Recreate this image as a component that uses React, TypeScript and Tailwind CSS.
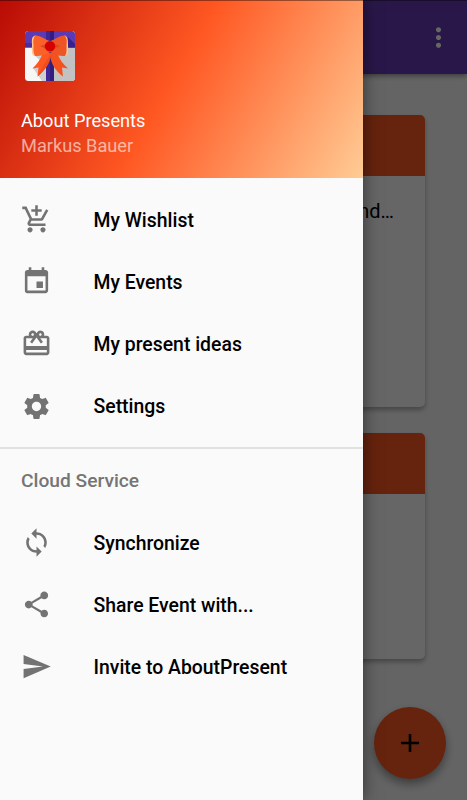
import React from 'react';
import type { IconType } from 'react-icons';
import {
  MdAdd,
  MdAddShoppingCart,
  MdEvent,
  MdMoreVert,
  MdRedeem,
  MdSend,
  MdSettings,
  MdShare,
  MdSync,
} from 'react-icons/md';

interface MenuItem {
  label: string;
  icon: IconType;
}

const mainItems: MenuItem[] = [
  { label: 'My Wishlist', icon: MdAddShoppingCart },
  { label: 'My Events', icon: MdEvent },
  { label: 'My present ideas', icon: MdRedeem },
  { label: 'Settings', icon: MdSettings },
];

const cloudItems: MenuItem[] = [
  { label: 'Synchronize', icon: MdSync },
  { label: 'Share Event with...', icon: MdShare },
  { label: 'Invite to AboutPresent', icon: MdSend },
];

const PresentLogo = () => (
  <svg width="50" height="50" viewBox="0 0 50 50">
    <defs>
      <clipPath id="box">
        <rect width="50" height="50" rx="3.5" />
      </clipPath>
    </defs>
    <g clipPath="url(#box)">
      <rect width="50" height="50" fill="#f7f7f7" />
      <rect x="29" width="21" height="50" fill="#c2c2c2" />
      <path d="M9 24 17 31 8 37 17 50H22V24Z" fill="#cfcfcf" />
      <rect width="50" height="16.5" fill="#5a3ab5" />
      <path d="M0 12H50V16.5H0Z" fill="#4a2e9e" />
      <path d="M43 6 50 13V16.5H41Z" fill="#39208a" />
      <rect x="21" width="8" height="50" fill="#402699" />
      <rect x="25" width="4" height="50" fill="#311c80" />
    </g>
    <path d="M10 4.5C6 6 7 10 7 14C7 19 6 23 9 25L14 22V6Z" fill="#ffc691" />
    <path d="M40 4.5C43 6 43 10 43 14C43 19 44 23 41 25L36 22V6Z" fill="#ffc691" />
    <path d="M18 21C16 28 12 33 7.500 37.500L13.500 36.500 12.500 45.500C19 40 24 34 26 22Z" fill="#ff5722" />
    <path d="M32 21C34 28 38 33 43 37.500L37 36.500 38 45.500C31 40 26 34 24.500 22Z" fill="#f4511e" />
    <path d="M25.500 24 19 33 12.500 45.500C19 40 24 34 25.500 27Z" fill="#ee4d1c" />
    <path d="M25 10C20 9 17 4.500 10 4.500C8 8 8 10 8.500 14C8.500 18 8 22 10 25C17 25 20 23.500 25 21Z" fill="#fb6229" />
    <path d="M25 10C30 9 33 4.500 40 4.500C42 8 42 10 41.500 14C41.500 18 42 22 40 25C33 25 30 23.500 25 21Z" fill="#ed5525" />
    <path d="M21 13 15 15 20 17.500Z" fill="#e04c1c" />
    <path d="M29 13 35 15 30 17.500Z" fill="#dc481a" />
    <circle cx="25" cy="15.2" r="5.2" fill="#d50000" />
  </svg>
);

const MenuRow = ({ label, icon: Icon }: MenuItem) => (
  <li className="flex h-[62.2px] items-center pl-[20.5px]">
    <Icon size={31} className="shrink-0 text-[#737373]" />
    <span className="ml-[42px] pt-[2px] whitespace-nowrap text-[19.4px] font-medium text-black">{label}</span>
  </li>
);

const EventList = () => (
  <div className="flex h-full flex-col bg-[#fafafa]">
    <header className="z-10 flex h-[74px] shrink-0 items-center justify-end bg-[#673ab7] pr-[13px] shadow-[0_2px_5px_rgba(0,0,0,0.4)]">
      <MdMoreVert size={31} className="text-white" />
    </header>
    <main className="flex flex-col gap-[26px] pt-[41.4px] pr-[41.6px] pl-[41px]">
      <section className="h-[292px] overflow-hidden rounded-[5px] bg-white shadow-[0_3px_5px_rgba(0,0,0,0.3)]">
        <div className="h-[61px] bg-[#ff5722]" />
        <p className="pt-[21px] pr-[31.5px] text-right text-[20px] leading-[28px] text-black">Birthday of a friend…</p>
      </section>
      <section className="h-[225.5px] overflow-hidden rounded-[5px] bg-white shadow-[0_3px_5px_rgba(0,0,0,0.3)]">
        <div className="h-[61px] bg-[#ff5722]" />
      </section>
    </main>
    <button className="absolute top-[707px] left-[374px] flex h-[72px] w-[72px] items-center justify-center rounded-full bg-[#ff5722] shadow-[0_5px_10px_rgba(0,0,0,0.4)]">
      <MdAdd size={31} className="-translate-x-[0.5px] -translate-y-[0.5px] text-black" />
    </button>
  </div>
);

const Drawer = () => (
  <aside className="absolute inset-y-0 left-0 w-[363px] bg-[#fafafa] shadow-[0_0_16px_rgba(0,0,0,0.5)]">
    <div className="flex h-[177.5px] flex-col bg-[linear-gradient(120deg,#b70b05_0%,#ff5722_47%,#ffcc95_100%)] pl-[21px]">
      <div className="pt-[31px] pl-[4px]">
        <PresentLogo />
      </div>
      <p className="mt-[27px] text-[18.2px] leading-[25px] text-white">About Presents</p>
      <p className="text-[18.2px] leading-[25px] text-white/60">Markus Bauer</p>
    </div>
    <nav>
      <ul className="pt-[10.9px]">
        {mainItems.map((item) => (
          <MenuRow key={item.label} {...item} />
        ))}
      </ul>
      <div className="mt-[10px] border-t-2 border-[#e1e1e1]">
        <h2 className="pt-px pl-[21px] text-[19.2px] leading-[61px] font-medium text-[#757575]">Cloud Service</h2>
        <ul>
          {cloudItems.map((item) => (
            <MenuRow key={item.label} {...item} />
          ))}
        </ul>
      </div>
    </nav>
  </aside>
);

export default function App() {
  return (
    <div className="relative h-[800px] w-[467px] overflow-hidden font-['Roboto',sans-serif]">
      <EventList />
      <div className="absolute inset-0 z-10 bg-black/60" />
      <div className="absolute inset-0 z-20">
        <Drawer />
        <div className="absolute inset-x-0 top-0 h-px bg-black/40" />
      </div>
    </div>
  );
}
